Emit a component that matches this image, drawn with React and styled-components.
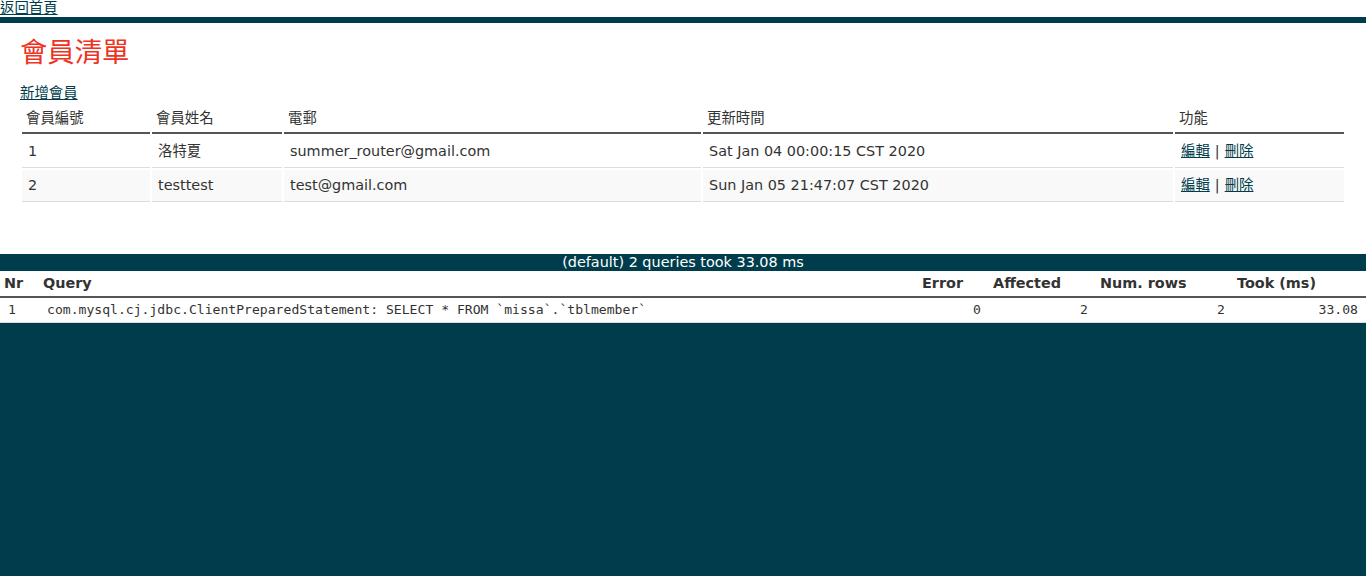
import React from "react";
import styled, { createGlobalStyle } from "styled-components";

const FONT = `"DejaVu Sans", Verdana, "Noto Sans CJK TC", sans-serif`;
const MONO = `"DejaVu Sans Mono", "Liberation Mono", monospace`;
const DARK = "#003d4c";

const Global = createGlobalStyle`
  html, body { margin: 0; padding: 0; }
  body {
    background: ${DARK};
    font-family: ${FONT};
    font-size: 14.4px;
    color: #333;
  }
`;

const TopBar = styled.div`
  background: #fff;
  height: 17px;
  line-height: 17px;
`;

const Link = styled.a`
  color: ${DARK};
  text-decoration: underline;
  cursor: pointer;
`;

const Stripe = styled.div`
  height: 6px;
  background: ${DARK};
`;

const Content = styled.div`
  background: #fff;
  padding: 10px 20px 50px;
`;

const Title = styled.h2`
  margin: 0 0 11px;
  font-size: 27.36px;
  line-height: 40px;
  font-weight: normal;
  color: #e32;
`;

const AddLine = styled.div`
  line-height: 19px;
  height: 19px;
`;

const Table = styled.table`
  width: 100%;
  border-collapse: separate;
  border-spacing: 2px;
  color: #333;
`;

const Th = styled.th`
  text-align: left;
  font-weight: normal;
  padding: 4px;
  line-height: 19px;
  border-bottom: 2px solid #555;
  width: ${(p) => p.$w}px;
`;

const Row = styled.tr`
  background: ${(p) => (p.$even ? "#f9f9f9" : "#fff")};
`;

const Td = styled.td`
  padding: 6px;
  line-height: 19px;
  text-align: left;
  vertical-align: top;
  border-bottom: 1px solid #ddd;
`;

const Sep = styled.span`
  margin: 0 5px;
  color: #333;
`;

const SqlTable = styled.table`
  width: 100%;
  border-collapse: collapse;
  background: #fff;
  color: #333;
`;

const Caption = styled.caption`
  background: ${DARK};
  color: #fff;
  height: 17px;
  line-height: 17px;
  text-align: center;
`;

const SqlTh = styled.th`
  text-align: left;
  font-weight: bold;
  padding: 3px 4px;
  line-height: 19px;
  border-bottom: 2px solid #555;
  width: ${(p) => p.$w}px;
`;

const SqlTd = styled.td`
  font-family: ${MONO};
  font-size: 13.1px;
  line-height: 16px;
  padding: 4px 8px;
  border-bottom: 1px solid #ddd;
  text-align: ${(p) => (p.$right ? "right" : "left")};
  white-space: nowrap;
`;

const members = [
  { id: 1, name: "洛特夏", email: "summer_router@gmail.com", time: "Sat Jan 04 00:00:15 CST 2020" },
  { id: 2, name: "testtest", email: "test@gmail.com", time: "Sun Jan 05 21:47:07 CST 2020" },
];

export default function App() {
  return (
    <>
      <Global />
      <TopBar>
        <Link>返回首頁</Link>
      </TopBar>
      <Stripe />
      <Content>
        <Title>會員清單</Title>
        <AddLine>
          <Link>新增會員</Link>
        </AddLine>
        <Table>
          <thead>
            <tr>
              <Th $w={120}>會員編號</Th>
              <Th $w={122}>會員姓名</Th>
              <Th $w={409}>電郵</Th>
              <Th $w={462}>更新時間</Th>
              <Th $w={161}>功能</Th>
            </tr>
          </thead>
          <tbody>
            {members.map((m, i) => (
              <Row key={m.id} $even={i % 2 === 1}>
                <Td>{m.id}</Td>
                <Td>{m.name}</Td>
                <Td>{m.email}</Td>
                <Td>{m.time}</Td>
                <Td>
                  <Link>編輯</Link>
                  <Sep>|</Sep>
                  <Link>刪除</Link>
                </Td>
              </Row>
            ))}
          </tbody>
        </Table>
      </Content>
      <SqlTable>
        <Caption>(default) 2 queries took 33.08 ms</Caption>
        <thead>
          <tr>
            <SqlTh $w={31}>Nr</SqlTh>
            <SqlTh $w={871}>Query</SqlTh>
            <SqlTh $w={63}>Error</SqlTh>
            <SqlTh $w={99}>Affected</SqlTh>
            <SqlTh $w={129}>Num. rows</SqlTh>
            <SqlTh $w={125}>Took (ms)</SqlTh>
          </tr>
        </thead>
        <tbody>
          <tr>
            <SqlTd>1</SqlTd>
            <SqlTd>com.mysql.cj.jdbc.ClientPreparedStatement: SELECT * FROM `missa`.`tblmember`</SqlTd>
            <SqlTd $right>0</SqlTd>
            <SqlTd $right>2</SqlTd>
            <SqlTd $right>2</SqlTd>
            <SqlTd $right>33.08</SqlTd>
          </tr>
        </tbody>
      </SqlTable>
    </>
  );
}
